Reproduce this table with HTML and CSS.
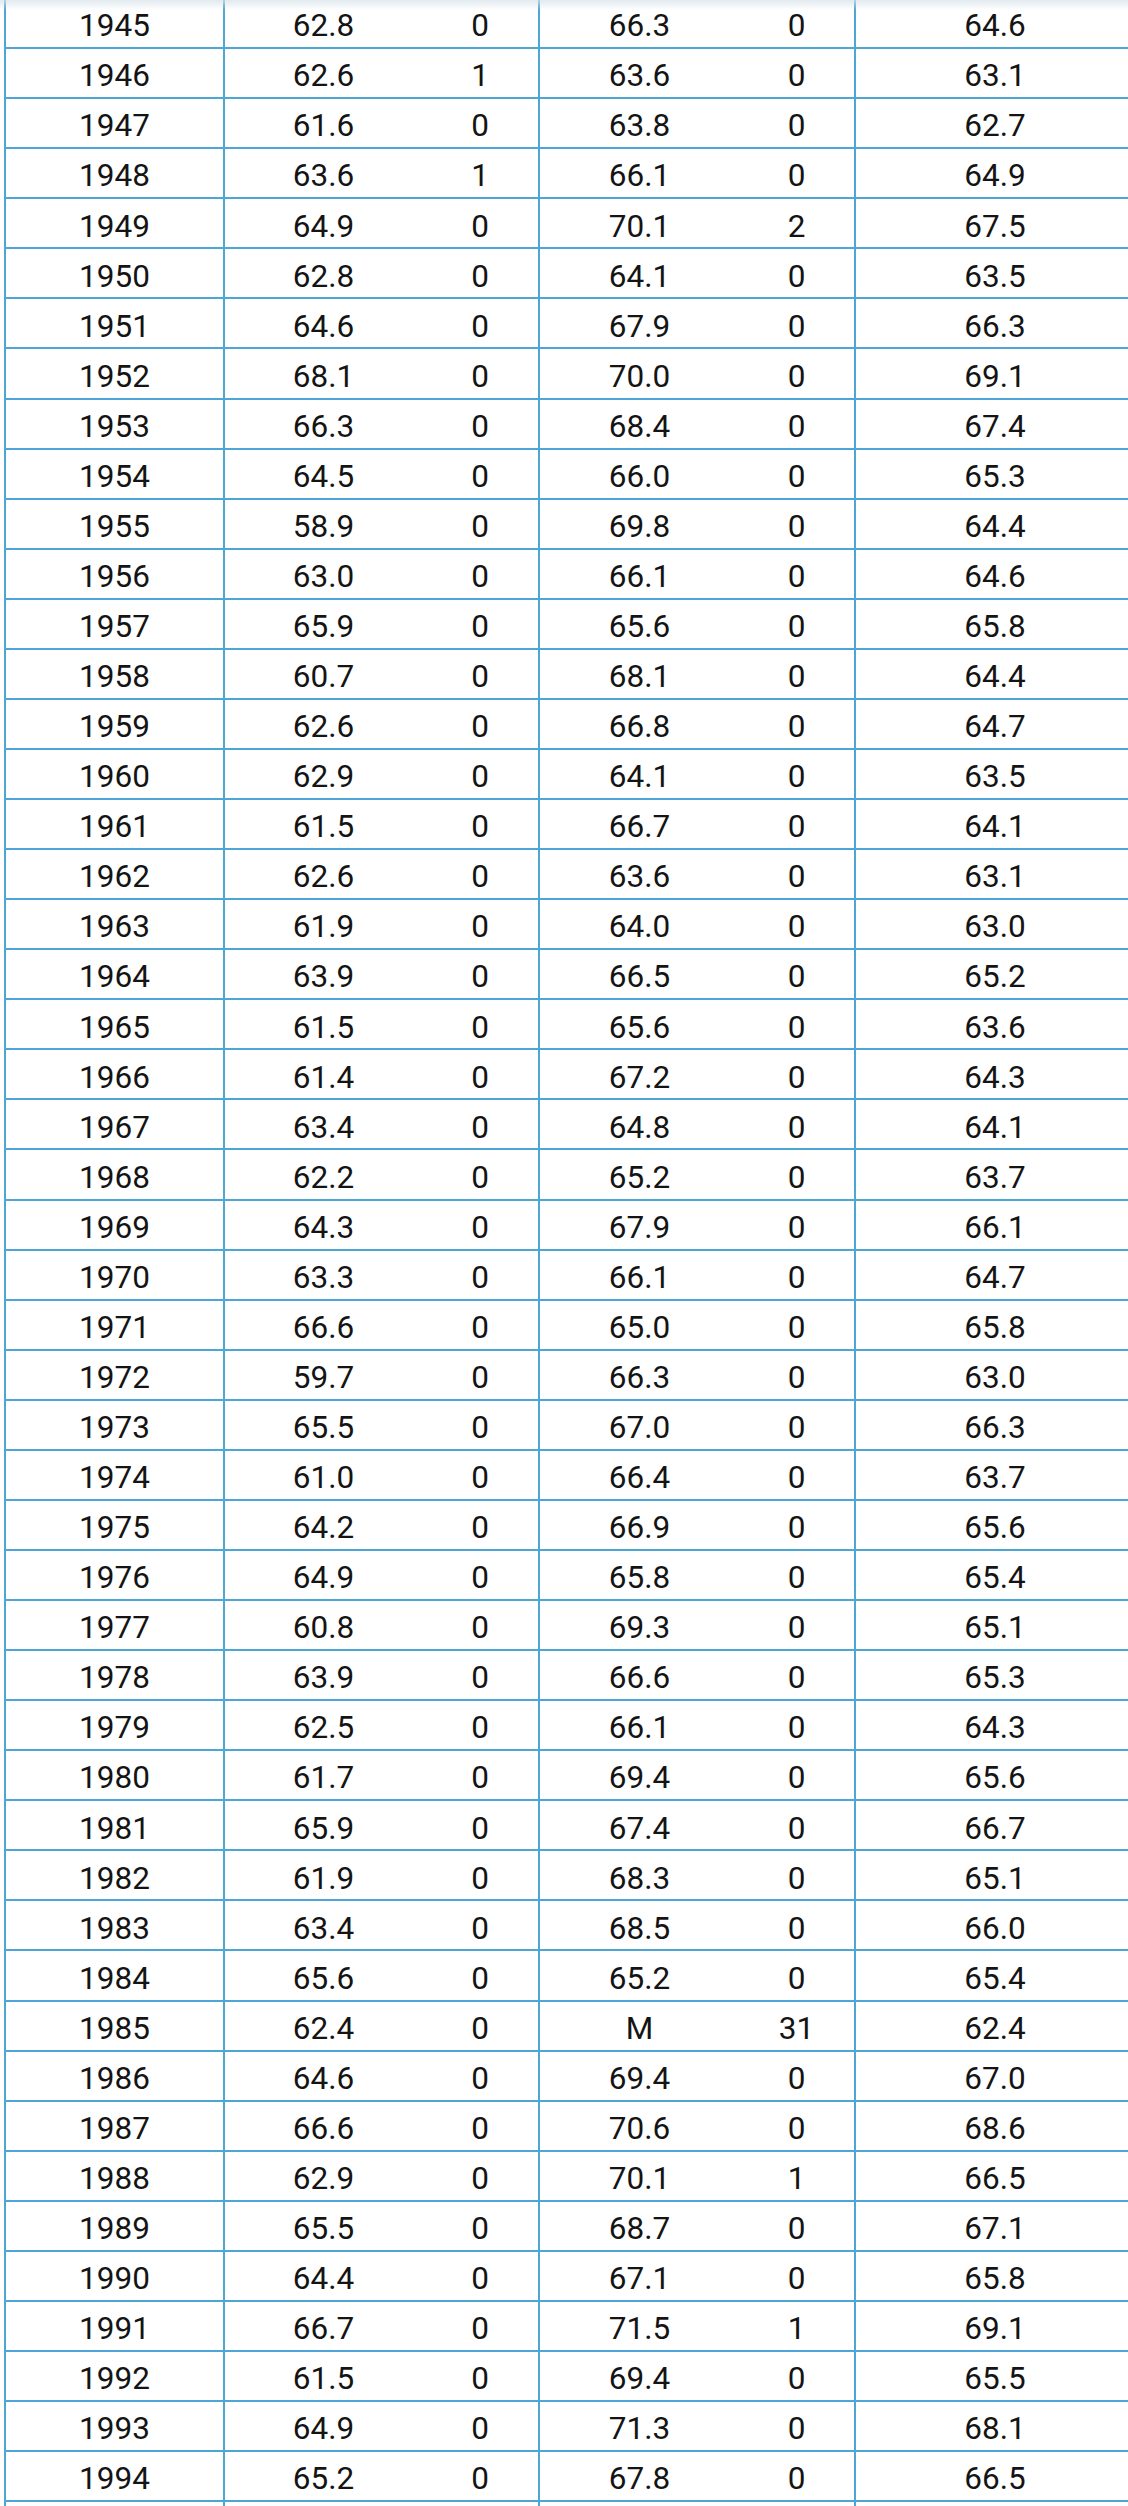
FILE: index.html
```html
<!DOCTYPE html>
<html lang="en">
<head>
<meta charset="utf-8">
<title>Annual temperatures</title>
<link rel="stylesheet" href="styles.css">
</head>
<body>
<div class="top-shade"></div>
<div class="grid-table" id="tbl">
<div class="row"><div class="cell year">1945</div><div class="cell v">62.8</div><div class="cell c">0</div><div class="cell v2">66.3</div><div class="cell c2">0</div><div class="cell m">64.6</div></div>
<div class="row"><div class="cell year">1946</div><div class="cell v">62.6</div><div class="cell c">1</div><div class="cell v2">63.6</div><div class="cell c2">0</div><div class="cell m">63.1</div></div>
<div class="row"><div class="cell year">1947</div><div class="cell v">61.6</div><div class="cell c">0</div><div class="cell v2">63.8</div><div class="cell c2">0</div><div class="cell m">62.7</div></div>
<div class="row"><div class="cell year">1948</div><div class="cell v">63.6</div><div class="cell c">1</div><div class="cell v2">66.1</div><div class="cell c2">0</div><div class="cell m">64.9</div></div>
<div class="row"><div class="cell year">1949</div><div class="cell v">64.9</div><div class="cell c">0</div><div class="cell v2">70.1</div><div class="cell c2">2</div><div class="cell m">67.5</div></div>
<div class="row"><div class="cell year">1950</div><div class="cell v">62.8</div><div class="cell c">0</div><div class="cell v2">64.1</div><div class="cell c2">0</div><div class="cell m">63.5</div></div>
<div class="row"><div class="cell year">1951</div><div class="cell v">64.6</div><div class="cell c">0</div><div class="cell v2">67.9</div><div class="cell c2">0</div><div class="cell m">66.3</div></div>
<div class="row"><div class="cell year">1952</div><div class="cell v">68.1</div><div class="cell c">0</div><div class="cell v2">70.0</div><div class="cell c2">0</div><div class="cell m">69.1</div></div>
<div class="row"><div class="cell year">1953</div><div class="cell v">66.3</div><div class="cell c">0</div><div class="cell v2">68.4</div><div class="cell c2">0</div><div class="cell m">67.4</div></div>
<div class="row"><div class="cell year">1954</div><div class="cell v">64.5</div><div class="cell c">0</div><div class="cell v2">66.0</div><div class="cell c2">0</div><div class="cell m">65.3</div></div>
<div class="row"><div class="cell year">1955</div><div class="cell v">58.9</div><div class="cell c">0</div><div class="cell v2">69.8</div><div class="cell c2">0</div><div class="cell m">64.4</div></div>
<div class="row"><div class="cell year">1956</div><div class="cell v">63.0</div><div class="cell c">0</div><div class="cell v2">66.1</div><div class="cell c2">0</div><div class="cell m">64.6</div></div>
<div class="row"><div class="cell year">1957</div><div class="cell v">65.9</div><div class="cell c">0</div><div class="cell v2">65.6</div><div class="cell c2">0</div><div class="cell m">65.8</div></div>
<div class="row"><div class="cell year">1958</div><div class="cell v">60.7</div><div class="cell c">0</div><div class="cell v2">68.1</div><div class="cell c2">0</div><div class="cell m">64.4</div></div>
<div class="row"><div class="cell year">1959</div><div class="cell v">62.6</div><div class="cell c">0</div><div class="cell v2">66.8</div><div class="cell c2">0</div><div class="cell m">64.7</div></div>
<div class="row"><div class="cell year">1960</div><div class="cell v">62.9</div><div class="cell c">0</div><div class="cell v2">64.1</div><div class="cell c2">0</div><div class="cell m">63.5</div></div>
<div class="row"><div class="cell year">1961</div><div class="cell v">61.5</div><div class="cell c">0</div><div class="cell v2">66.7</div><div class="cell c2">0</div><div class="cell m">64.1</div></div>
<div class="row"><div class="cell year">1962</div><div class="cell v">62.6</div><div class="cell c">0</div><div class="cell v2">63.6</div><div class="cell c2">0</div><div class="cell m">63.1</div></div>
<div class="row"><div class="cell year">1963</div><div class="cell v">61.9</div><div class="cell c">0</div><div class="cell v2">64.0</div><div class="cell c2">0</div><div class="cell m">63.0</div></div>
<div class="row"><div class="cell year">1964</div><div class="cell v">63.9</div><div class="cell c">0</div><div class="cell v2">66.5</div><div class="cell c2">0</div><div class="cell m">65.2</div></div>
<div class="row"><div class="cell year">1965</div><div class="cell v">61.5</div><div class="cell c">0</div><div class="cell v2">65.6</div><div class="cell c2">0</div><div class="cell m">63.6</div></div>
<div class="row"><div class="cell year">1966</div><div class="cell v">61.4</div><div class="cell c">0</div><div class="cell v2">67.2</div><div class="cell c2">0</div><div class="cell m">64.3</div></div>
<div class="row"><div class="cell year">1967</div><div class="cell v">63.4</div><div class="cell c">0</div><div class="cell v2">64.8</div><div class="cell c2">0</div><div class="cell m">64.1</div></div>
<div class="row"><div class="cell year">1968</div><div class="cell v">62.2</div><div class="cell c">0</div><div class="cell v2">65.2</div><div class="cell c2">0</div><div class="cell m">63.7</div></div>
<div class="row"><div class="cell year">1969</div><div class="cell v">64.3</div><div class="cell c">0</div><div class="cell v2">67.9</div><div class="cell c2">0</div><div class="cell m">66.1</div></div>
<div class="row"><div class="cell year">1970</div><div class="cell v">63.3</div><div class="cell c">0</div><div class="cell v2">66.1</div><div class="cell c2">0</div><div class="cell m">64.7</div></div>
<div class="row"><div class="cell year">1971</div><div class="cell v">66.6</div><div class="cell c">0</div><div class="cell v2">65.0</div><div class="cell c2">0</div><div class="cell m">65.8</div></div>
<div class="row"><div class="cell year">1972</div><div class="cell v">59.7</div><div class="cell c">0</div><div class="cell v2">66.3</div><div class="cell c2">0</div><div class="cell m">63.0</div></div>
<div class="row"><div class="cell year">1973</div><div class="cell v">65.5</div><div class="cell c">0</div><div class="cell v2">67.0</div><div class="cell c2">0</div><div class="cell m">66.3</div></div>
<div class="row"><div class="cell year">1974</div><div class="cell v">61.0</div><div class="cell c">0</div><div class="cell v2">66.4</div><div class="cell c2">0</div><div class="cell m">63.7</div></div>
<div class="row"><div class="cell year">1975</div><div class="cell v">64.2</div><div class="cell c">0</div><div class="cell v2">66.9</div><div class="cell c2">0</div><div class="cell m">65.6</div></div>
<div class="row"><div class="cell year">1976</div><div class="cell v">64.9</div><div class="cell c">0</div><div class="cell v2">65.8</div><div class="cell c2">0</div><div class="cell m">65.4</div></div>
<div class="row"><div class="cell year">1977</div><div class="cell v">60.8</div><div class="cell c">0</div><div class="cell v2">69.3</div><div class="cell c2">0</div><div class="cell m">65.1</div></div>
<div class="row"><div class="cell year">1978</div><div class="cell v">63.9</div><div class="cell c">0</div><div class="cell v2">66.6</div><div class="cell c2">0</div><div class="cell m">65.3</div></div>
<div class="row"><div class="cell year">1979</div><div class="cell v">62.5</div><div class="cell c">0</div><div class="cell v2">66.1</div><div class="cell c2">0</div><div class="cell m">64.3</div></div>
<div class="row"><div class="cell year">1980</div><div class="cell v">61.7</div><div class="cell c">0</div><div class="cell v2">69.4</div><div class="cell c2">0</div><div class="cell m">65.6</div></div>
<div class="row"><div class="cell year">1981</div><div class="cell v">65.9</div><div class="cell c">0</div><div class="cell v2">67.4</div><div class="cell c2">0</div><div class="cell m">66.7</div></div>
<div class="row"><div class="cell year">1982</div><div class="cell v">61.9</div><div class="cell c">0</div><div class="cell v2">68.3</div><div class="cell c2">0</div><div class="cell m">65.1</div></div>
<div class="row"><div class="cell year">1983</div><div class="cell v">63.4</div><div class="cell c">0</div><div class="cell v2">68.5</div><div class="cell c2">0</div><div class="cell m">66.0</div></div>
<div class="row"><div class="cell year">1984</div><div class="cell v">65.6</div><div class="cell c">0</div><div class="cell v2">65.2</div><div class="cell c2">0</div><div class="cell m">65.4</div></div>
<div class="row"><div class="cell year">1985</div><div class="cell v">62.4</div><div class="cell c">0</div><div class="cell v2">M</div><div class="cell c2">31</div><div class="cell m">62.4</div></div>
<div class="row"><div class="cell year">1986</div><div class="cell v">64.6</div><div class="cell c">0</div><div class="cell v2">69.4</div><div class="cell c2">0</div><div class="cell m">67.0</div></div>
<div class="row"><div class="cell year">1987</div><div class="cell v">66.6</div><div class="cell c">0</div><div class="cell v2">70.6</div><div class="cell c2">0</div><div class="cell m">68.6</div></div>
<div class="row"><div class="cell year">1988</div><div class="cell v">62.9</div><div class="cell c">0</div><div class="cell v2">70.1</div><div class="cell c2">1</div><div class="cell m">66.5</div></div>
<div class="row"><div class="cell year">1989</div><div class="cell v">65.5</div><div class="cell c">0</div><div class="cell v2">68.7</div><div class="cell c2">0</div><div class="cell m">67.1</div></div>
<div class="row"><div class="cell year">1990</div><div class="cell v">64.4</div><div class="cell c">0</div><div class="cell v2">67.1</div><div class="cell c2">0</div><div class="cell m">65.8</div></div>
<div class="row"><div class="cell year">1991</div><div class="cell v">66.7</div><div class="cell c">0</div><div class="cell v2">71.5</div><div class="cell c2">1</div><div class="cell m">69.1</div></div>
<div class="row"><div class="cell year">1992</div><div class="cell v">61.5</div><div class="cell c">0</div><div class="cell v2">69.4</div><div class="cell c2">0</div><div class="cell m">65.5</div></div>
<div class="row"><div class="cell year">1993</div><div class="cell v">64.9</div><div class="cell c">0</div><div class="cell v2">71.3</div><div class="cell c2">0</div><div class="cell m">68.1</div></div>
<div class="row"><div class="cell year">1994</div><div class="cell v">65.2</div><div class="cell c">0</div><div class="cell v2">67.8</div><div class="cell c2">0</div><div class="cell m">66.5</div></div>
<div class="row"><div class="cell year"></div><div class="cell v"></div><div class="cell c"></div><div class="cell v2"></div><div class="cell c2"></div><div class="cell m"></div></div>
</div>
</body>
</html>
```

FILE: styles.css
```css
html, body {
  margin: 0;
  padding: 0;
  background: #ffffff;
  overflow: hidden;
}

body {
  font-family: Roboto, "Noto Sans", "Liberation Sans", sans-serif;
  color: #141414;
}

.top-shade {
  position: fixed;
  top: 0;
  left: 0;
  right: 0;
  height: 10px;
  background: linear-gradient(to bottom, rgba(214, 226, 234, 0.75), rgba(255, 255, 255, 0));
  z-index: 2;
  pointer-events: none;
}

.grid-table {
  margin-top: -1px;
  padding-left: 4px;
  width: 1130px;
}

.row {
  display: grid;
  grid-template-columns: 221px 197px 118px 199px 117px 278px;
  height: 50.0625px;
  box-sizing: border-box;
  border-bottom: 2px solid #4ea6d7;
}

.cell {
  box-sizing: border-box;
  display: flex;
  align-items: center;
  justify-content: center;
  font-size: 31.5px;
  line-height: 1;
  padding-top: 6px;
}

.year {
  border-left: 2px solid #4ea6d7;
  border-right: 2px solid #4ea6d7;
}

.c {
  border-right: 2px solid #4ea6d7;
}

.c2 {
  border-right: 2px solid #4ea6d7;
}
```
